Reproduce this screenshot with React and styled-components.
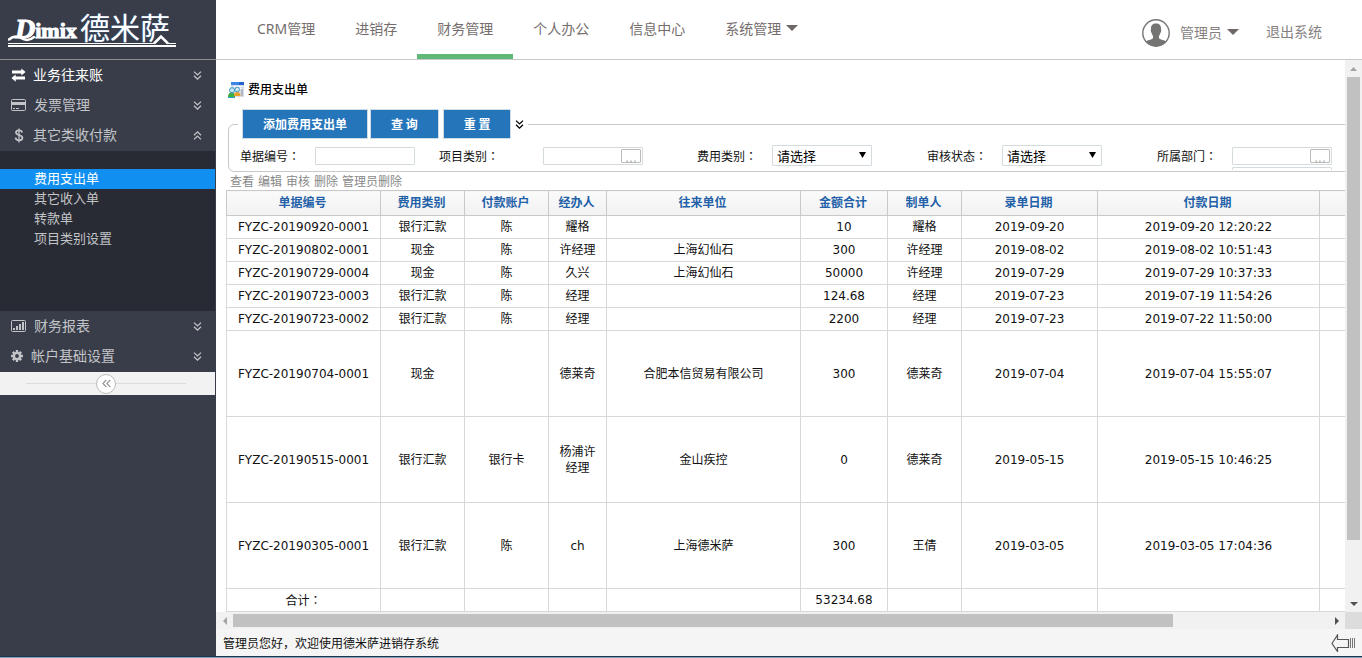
import React from 'react';
import styled, { createGlobalStyle } from 'styled-components';

const Global = createGlobalStyle`
  * { box-sizing: border-box; }
  html, body, #root { height: 100%; }
  body {
    margin: 0;
    overflow: hidden;
    font-family: "DejaVu Sans", "Noto Sans CJK SC", sans-serif;
    font-size: 12px;
    color: #111;
    background: #fff;
  }
  a { color: inherit; text-decoration: none; }
  button, input, select { font-family: inherit; margin: 0; }
  ul { list-style: none; margin: 0; padding: 0; }
`;

const Page = styled.div`
  height: 100%;
  display: grid;
  grid-template-columns: 216px minmax(0, 1fr);
  grid-template-rows: minmax(0, 1fr) 2px;
`;

const DesktopEdge = styled.div`
  grid-column: 1 / -1;
  border-top: 1px solid #1c3348;
  background: #7fa3b8;
`;

/* ---------- sidebar ---------- */

const Sidebar = styled.aside`
  background: #393d49;
  padding-right: 1px;
  font-family: "Noto Sans", "Noto Sans CJK SC", sans-serif;
`;

const LogoBar = styled.div`
  height: 60px;
  margin-right: -1px;
  border-bottom: 1px solid #8c8c8c;
  padding: 11px 0 0 8px;
`;

const Logo = styled.a`
  display: flex;
  flex-direction: column;
  width: 168px;
  color: #fff;
`;

const LogoWords = styled.span`
  display: flex;
  align-items: flex-end;
  height: 32px;
  text-shadow: 0 0 1px #3f86c8;
`;

const LogoLatin = styled.span`
  display: flex;
  align-items: baseline;
  width: 72px;
  font: bold 22px/24px "Liberation Serif", serif;
  -webkit-text-stroke: 1px #fff;
`;

const LogoInitial = styled.span`
  font-size: 28px;
  font-style: italic;
  padding-left: 7px;
`;

const LogoHan = styled.span`
  font: 400 30px/34px "Noto Sans CJK SC", sans-serif;
`;

const LogoRule = styled.svg`
  display: block;
  margin-top: -16px;
`;

const MenuButton = styled.button`
  display: flex;
  align-items: center;
  width: 100%;
  height: 30px;
  padding: 0 13px 0 11px;
  border: 0;
  background: none;
  color: ${(p) => (p.$active ? '#fff' : '#c2c4c8')};
  font-size: 14px;
  line-height: 20px;
  text-align: left;
`;

const MenuIcon = styled.span`
  display: flex;
  width: ${(p) => p.$width || 22}px;
  flex: none;
`;

const MenuLabel = styled.span`
  flex: 1;
`;

const SubMenu = styled.ul`
  height: 160px;
  margin-top: 1px;
  padding-top: 18px;
  background: #282b33;
`;

const SubLink = styled.a`
  display: block;
  height: 20px;
  padding-left: 34px;
  font-size: 13px;
  line-height: 18px;
  color: ${(p) => (p.$active ? '#fff' : '#c2c4c8')};
  background: ${(p) => (p.$active ? '#108ff1' : 'none')};
`;

const CollapseBar = styled.div`
  display: flex;
  align-items: center;
  height: 23px;
  margin-top: 1px;
  padding: 0 29px 0 26px;
  background: #f2f2f2;
  &::before, &::after {
    content: "";
    flex: 1;
    height: 1px;
    background: #ddd;
  }
`;

const CollapseButton = styled.button`
  display: flex;
  align-items: center;
  justify-content: center;
  width: 20px;
  height: 20px;
  padding: 0;
  border: 1px solid #bbb;
  border-radius: 50%;
  background: #fff;
`;

/* ---------- header ---------- */

const Workspace = styled.div`
  display: flex;
  flex-direction: column;
  min-height: 0;
`;

const Header = styled.header`
  display: flex;
  justify-content: space-between;
  flex: none;
  height: 60px;
  padding: 0 40px 0 21px;
  border-bottom: 1px solid #c8c8c8;
  font-family: "Noto Sans", "Noto Sans CJK SC", sans-serif;
  font-size: 14px;
  color: #756d6d;
`;

const Nav = styled.nav`
  display: flex;
`;

const NavLink = styled.a`
  display: flex;
  align-items: center;
  gap: 5px;
  height: 59px;
  padding: 2px 20px 0;
  border-bottom: 5px solid ${(p) => (p.$active ? '#5fb878' : 'transparent')};
  white-space: nowrap;
`;

const Account = styled.div`
  display: flex;
  align-items: center;
  padding-top: 6px;
  color: #857f7f;
  line-height: 20px;
`;

const UserButton = styled.button`
  display: flex;
  align-items: center;
  gap: 5px;
  height: 22px;
  margin: 0 27px 0 10px;
  padding: 0 0 2px;
  border: 0;
  background: none;
  color: inherit;
  font-size: 14px;
`;

const SignOut = styled.a`
  height: 22px;
`;

/* ---------- scrolling frame ---------- */

const Frame = styled.div`
  flex: 1;
  min-height: 0;
  display: grid;
  grid-template-columns: minmax(0, 1fr) 17px;
  grid-template-rows: minmax(0, 1fr) 17px;
`;

const Viewport = styled.main`
  overflow: hidden;
  padding: 22px 0 0 10px;
`;

const Sheet = styled.div`
  width: max-content;
`;

const Track = styled.div`
  display: flex;
  flex-direction: ${(p) => (p.$vertical ? 'column' : 'row')};
  background: #f1f1f1;
`;

const TrackEnd = styled.span`
  display: flex;
  align-items: center;
  justify-content: center;
  flex: none;
  width: 17px;
  height: 17px;
`;

const TrackRun = styled.span`
  flex: 1;
  display: flex;
  flex-direction: inherit;
  padding: ${(p) => (p.$vertical ? '0 2px' : '2px 0')};
`;

const Thumb = styled.span`
  flex: none;
  flex-basis: ${(p) => p.$share}%;
  background: #c1c1c1;
`;

const Corner = styled.div`
  background: #dcdcdc;
`;

const StatusBar = styled.footer`
  display: flex;
  align-items: center;
  justify-content: space-between;
  flex: none;
  height: 27px;
  padding: 0 7px;
  background: #f5f5f5;
`;

const IconButton = styled.button`
  display: flex;
  padding: 0;
  border: 0;
  background: none;
`;

/* ---------- search form ---------- */

const Title = styled.h1`
  display: flex;
  align-items: center;
  gap: 4px;
  height: 16px;
  margin: 0 0 11px;
  padding-left: 2px;
  font-size: 12px;
  line-height: 18px;
  font-weight: 500;
  color: #000;
`;

const SearchBox = styled.fieldset`
  margin: 0 0 0 2px;
  padding: 0;
  border: 1px solid #c8c8c8;
  border-radius: 6px;
`;

const SearchLegend = styled.legend`
  display: flex;
  align-items: center;
  gap: 4px;
  margin-left: 9px;
  padding: 0 4px;
`;

const ButtonPair = styled.span`
  display: flex;
  gap: 2px;
`;

const ActionButton = styled.button`
  height: 30px;
  padding: 0 20px 2px;
  border: 1px solid #cfdbe4;
  background: #2575bb;
  color: #fff;
  font-family: "Noto Sans CJK SC", sans-serif;
  font-size: 12px;
  font-weight: bold;
`;

const Fields = styled.div`
  display: grid;
  grid-template-columns: 75px 124px 104px 154px 75px 155px 75px 155px 75px 100px;
  align-items: start;
  height: 32px;
  padding: 6px 0 0 11px;
`;

const FieldLabel = styled.label`
  line-height: 21px;
`;

const CenteredMark = styled.span`
  font-family: "Noto Sans CJK TC", sans-serif;
`;

const Picker = styled.span`
  display: flex;
  width: 100px;
  height: 18px;
  margin-top: 2px;
  border: 1px solid #d3dbde;
  border-radius: 1px;
  background: #fff;
`;

const TextBox = styled.input`
  flex: 1;
  min-width: 0;
  padding: 0 3px;
  border: 0;
  outline: 0;
  background: none;
  font-size: 12px;
`;

const PickButton = styled.button`
  width: 20px;
  height: 14px;
  margin: 1px;
  padding: 2px 0 0;
  border: 1px solid #bbb;
  border-radius: 1px;
  background: #fff;
  color: #aaa;
  font-size: 12px;
  line-height: 12px;
`;

const StackedPickers = styled.div`
  height: 25px;
  overflow: hidden;
`;

const SelectWrap = styled.span`
  display: flex;
  align-items: center;
  width: 100px;
  height: 21px;
  padding-right: 5px;
  border: 1px solid #d3dbde;
  border-radius: 1px;
`;

const Select = styled.select`
  flex: 1;
  min-width: 0;
  height: 19px;
  padding: 2px 0 0 4px;
  border: 0;
  appearance: none;
  background: none;
  color: #000;
  font-size: 13px;
  line-height: 16px;
`;

const RowActions = styled.div`
  display: flex;
  gap: 4px;
  height: 18px;
  padding-left: 4px;
  line-height: 20px;
  color: #888;
`;

/* ---------- table ---------- */

const Grid = styled.table`
  width: 1233px;
  table-layout: fixed;
  border-collapse: collapse;
`;

const HeadCell = styled.th`
  height: 25px;
  padding: 0 6px 0 4px;
  border: 1px solid #c9c9c9;
  background: linear-gradient(#fafafa, #f2f2f2);
  color: #2261a8;
  font-size: 12px;
  font-weight: bold;
  line-height: 16px;
`;

const Cell = styled.td`
  height: ${(p) => (p.$tall ? 86 : 23)}px;
  padding: 0 8px;
  border: 1px solid #d8d8d8;
  text-align: center;
  line-height: 16px;
`;

/* ---------- drawings ---------- */

const Caret = ({ color = '#6f6666' }) => (
  <svg width="12" height="6" viewBox="0 0 12 6" aria-hidden="true">
    <path d="M0 0h12L6 6z" fill={color} />
  </svg>
);

const DoubleChevron = ({ up, color = '#c2c4c8', size = 9 }) => (
  <svg width={size} height={size} viewBox="0 0 9 9" fill="none" stroke={color} strokeWidth="1.3" aria-hidden="true">
    {up ? (
      <path d="M1 4.2 4.5 .9 8 4.2M1 8.4 4.5 5.1 8 8.4" />
    ) : (
      <path d="M1 .6 4.5 3.9 8 .6M1 4.8 4.5 8.1 8 4.8" />
    )}
  </svg>
);

const ExchangeIcon = () => (
  <svg width="15" height="14" viewBox="0 0 15 14" fill="currentColor" aria-hidden="true">
    <path d="M1 2.6h9.3V.4L14.6 4l-4.3 3.6V5.4H1zM14 8.6H4.7V6.6L.4 10.1l4.3 3.6v-2.2H14z" />
  </svg>
);

const CardIcon = () => (
  <svg width="16" height="12" viewBox="0 0 16 12" aria-hidden="true">
    <rect x=".5" y=".5" width="14" height="11" rx="1" fill="none" stroke="currentColor" />
    <path d="M1 3h13v3H1zM2 9h2v1H2zM5 9h3v1H5z" fill="currentColor" />
  </svg>
);

const DollarIcon = () => (
  <svg width="16" height="15" viewBox="0 0 16 15" fill="none" stroke="currentColor" aria-hidden="true">
    <path d="M11.2 4.4C10.8 2.9 9.6 2.3 8 2.3c-1.8 0-3 .9-3 2.3 0 3.3 6.4 1.7 6.4 5.2 0 1.6-1.4 2.6-3.3 2.6-2 0-3.3-.9-3.6-2.7" strokeWidth="1.8" />
    <path d="M8 .4v14" strokeWidth="1.3" />
  </svg>
);

const ChartIcon = () => (
  <svg width="16" height="12" viewBox="0 0 16 12" aria-hidden="true">
    <rect x=".5" y=".5" width="14" height="11" rx="1" fill="none" stroke="currentColor" />
    <path d="M2 8h2v2H2zM5 6h2v4H5zM8 4h2v6H8zM11 2h2v8h-2z" fill="currentColor" />
  </svg>
);

const GearIcon = () => (
  <svg width="12" height="12" viewBox="0 0 12 12" aria-hidden="true">
    <g stroke="currentColor" strokeWidth="2.4">
      <path d="M6 0v12M0 6h12M1.8 1.8l8.4 8.4M10.2 1.8l-8.4 8.4" />
    </g>
    <circle cx="6" cy="6" r="4.3" fill="currentColor" />
    <circle cx="6" cy="6" r="1.9" fill="#393d49" />
  </svg>
);

const AvatarIcon = () => (
  <svg width="28" height="28" viewBox="0 0 28 28" aria-hidden="true">
    <circle cx="14" cy="14" r="13.2" fill="#fff" stroke="#767676" strokeWidth="1.4" />
    <path
      d="M14 4.4c3.4 0 5.2 2 5 5.4 0 1.2.4 1.4.2 2.4-.2.8-.6 1-.8 1.8-.4 1.6-1 2.4-1.4 3-.2 1.6 0 2.4.6 2.8 1.6 1 4.4 1.2 6.600 2.600A13 13 0 0 1 14 27.200a13 13 0 0 1-10.200-4.800c2.200-1.400 5-1.600 6.600-2.600.6-.4.8-1.200.6-2.800-.4-.6-1-1.400-1.400-3-.2-.8-.6-1-.8-1.800-.2-1 .2-1.200.2-2.400-.2-3.400 1.600-5.400 5-5.400z"
      fill="#747472"
    />
  </svg>
);

const PageIcon = () => (
  <svg width="16" height="16" viewBox="0 0 16 16" aria-hidden="true">
    <path d="M3 0h13v15H3z" fill="#d5dde8" />
    <path d="M3 0h13v3H3z" fill="#3d85e4" />
    <path d="M11 0h5v3h-5z" fill="#2163cf" />
    <path d="M6 4.500h8M10 6.500h4" stroke="#fff" />
    <path d="M13 7h2v7h-2z" fill="#b3b9c4" />
    <path d="M0 15.500c0-4 1.500-5 3.500-5s3.500 1 3.500 5z" fill="#3eae49" />
    <circle cx="4" cy="8.200" r="2.500" fill="#c9e7f5" stroke="#3d97bd" />
    <path d="M6 14c0-3 1.300-4 3.200-4s3.300 1 3.300 4z" fill="#e8a02c" />
    <circle cx="9.200" cy="7.500" r="2.300" fill="#cfe8f4" stroke="#3d97bd" />
    <path d="M0 15.500h7" stroke="#2aa5b8" />
  </svg>
);

const BackArrowIcon = () => (
  <svg width="24" height="18" viewBox="0 0 24 18" fill="none" stroke="#5a5555" aria-hidden="true">
    <path d="M1 9.500 6.500 1v4.500h11v8h-11V17.500z" strokeWidth="1.200" />
    <path d="M19.500 4v10M21.500 4v10M23.500 4v10" stroke="#777" />
  </svg>
);

const arrowPaths = {
  up: 'M0 6 3.500 2 7 6z',
  down: 'M0 2h8L4 6z',
  left: 'M6 0v8L2 4z',
  right: 'M2 0v8l4-4z',
};

const ScrollArrow = ({ dir, color }) => (
  <TrackEnd>
    <svg width="8" height="8" viewBox="0 0 8 8" aria-hidden="true">
      <path d={arrowPaths[dir]} fill={color} />
    </svg>
  </TrackEnd>
);

/* ---------- data ---------- */

const navItems = ['CRM管理', '进销存', '财务管理', '个人办公', '信息中心', '系统管理'];
const subItems = ['费用支出单', '其它收入单', '转款单', '项目类别设置'];
const rowActions = ['查看', '编辑', '审核', '删除', '管理员删除'];

const columns = [
  ['单据编号', 154],
  ['费用类别', 84],
  ['付款账户', 84],
  ['经办人', 58],
  ['往来单位', 194],
  ['金额合计', 87],
  ['制单人', 74],
  ['录单日期', 136],
  ['付款日期', 222],
  ['', 140],
];

const rows = [
  ['FYZC-20190920-0001', '银行汇款', '陈', '耀格', '', '10', '耀格', '2019-09-20', '2019-09-20 12:20:22'],
  ['FYZC-20190802-0001', '现金', '陈', '许经理', '上海幻仙石', '300', '许经理', '2019-08-02', '2019-08-02 10:51:43'],
  ['FYZC-20190729-0004', '现金', '陈', '久兴', '上海幻仙石', '50000', '许经理', '2019-07-29', '2019-07-29 10:37:33'],
  ['FYZC-20190723-0003', '银行汇款', '陈', '经理', '', '124.68', '经理', '2019-07-23', '2019-07-19 11:54:26'],
  ['FYZC-20190723-0002', '银行汇款', '陈', '经理', '', '2200', '经理', '2019-07-23', '2019-07-22 11:50:00'],
  ['FYZC-20190704-0001', '现金', '', '德莱奇', '合肥本信贸易有限公司', '300', '德莱奇', '2019-07-04', '2019-07-04 15:55:07'],
  ['FYZC-20190515-0001', '银行汇款', '银行卡', '杨浦许经理', '金山疾控', '0', '德莱奇', '2019-05-15', '2019-05-15 10:46:25'],
  ['FYZC-20190305-0001', '银行汇款', '陈', 'ch', '上海德米萨', '300', '王倩', '2019-03-05', '2019-03-05 17:04:36'],
];
const firstTallRow = 5;

const Colon = () => <CenteredMark>：</CenteredMark>;

const MenuItem = ({ icon, label, active, open, iconWidth }) => (
  <MenuButton type="button" $active={active} aria-expanded={!!open}>
    <MenuIcon $width={iconWidth}>{icon}</MenuIcon>
    <MenuLabel>{label}</MenuLabel>
    <DoubleChevron up={open} />
  </MenuButton>
);

const PickerField = ({ id }) => (
  <Picker>
    <TextBox id={id} type="text" />
    <PickButton type="button" aria-label="选择">...</PickButton>
  </Picker>
);

const SelectField = ({ id }) => (
  <SelectWrap>
    <Select id={id}>
      <option>请选择</option>
    </Select>
    <svg width="7" height="8" viewBox="0 0 7 8" aria-hidden="true">
      <path d="M0 0h7L3.500 6z" fill="#000" />
    </svg>
  </SelectWrap>
);

export default function App() {
  return (
    <>
      <Global />
      <Page>
        <Sidebar>
          <LogoBar>
            <Logo href="#">
              <LogoWords>
                <LogoLatin>
                  <LogoInitial>D</LogoInitial>imix
                </LogoLatin>
                <LogoHan>德米萨</LogoHan>
              </LogoWords>
              <LogoRule width="168" height="20" viewBox="0 0 168 20" fill="none" stroke="#fff" aria-hidden="true">
                <path d="M1 12.500C5 9 9 8.500 13 11s9 2.500 13-1" strokeWidth="2.500" strokeLinecap="round" />
                <path d="M0 16.500h146M160 16.500h8" />
                <path d="M0 19h168" strokeWidth="2" />
                <path d="M146 16.500l7-7 7 7" strokeWidth="2.500" />
              </LogoRule>
            </Logo>
          </LogoBar>
          <MenuItem icon={<ExchangeIcon />} label="业务往来账" active />
          <MenuItem icon={<CardIcon />} label="发票管理" iconWidth={23} />
          <MenuItem icon={<DollarIcon />} label="其它类收付款" open />
          <SubMenu>
            {subItems.map((text, i) => (
              <li key={text}>
                <SubLink href="#" $active={i === 0}>{text}</SubLink>
              </li>
            ))}
          </SubMenu>
          <MenuItem icon={<ChartIcon />} label="财务报表" iconWidth={23} />
          <MenuItem icon={<GearIcon />} label="帐户基础设置" iconWidth={20} />
          <CollapseBar>
            <CollapseButton type="button" aria-label="收起菜单">
              <svg width="9" height="9" viewBox="0 0 9 9" fill="none" stroke="#999" strokeWidth="1.200" aria-hidden="true">
                <path d="M4.300 1 .9 4.500l3.400 3.500M8.300 1 4.900 4.500l3.400 3.500" />
              </svg>
            </CollapseButton>
          </CollapseBar>
        </Sidebar>

        <Workspace>
          <Header>
            <Nav>
              {navItems.map((text) => (
                <NavLink key={text} href="#" $active={text === '财务管理'}>
                  {text}
                  {text === '系统管理' && <Caret />}
                </NavLink>
              ))}
            </Nav>
            <Account>
              <AvatarIcon />
              <UserButton type="button">
                管理员
                <Caret />
              </UserButton>
              <SignOut href="#">退出系统</SignOut>
            </Account>
          </Header>

          <Frame>
            <Viewport>
              <Sheet>
                <Title>
                  <PageIcon />
                  费用支出单
                </Title>
                <SearchBox>
                  <SearchLegend>
                    <ButtonPair>
                      <ActionButton type="button">添加费用支出单</ActionButton>
                      <ActionButton type="button">查 询</ActionButton>
                    </ButtonPair>
                    <ActionButton type="button">重 置</ActionButton>
                    <DoubleChevron color="#000" />
                  </SearchLegend>
                  <Fields>
                    <FieldLabel htmlFor="billNo">单据编号<Colon /></FieldLabel>
                    <Picker>
                      <TextBox id="billNo" type="text" />
                    </Picker>
                    <FieldLabel htmlFor="project">项目类别<Colon /></FieldLabel>
                    <PickerField id="project" />
                    <FieldLabel htmlFor="feeType">费用类别<Colon /></FieldLabel>
                    <SelectField id="feeType" />
                    <FieldLabel htmlFor="audit">审核状态<Colon /></FieldLabel>
                    <SelectField id="audit" />
                    <FieldLabel htmlFor="dept">所属部门<Colon /></FieldLabel>
                    <StackedPickers>
                      <PickerField id="dept" />
                      <Picker />
                    </StackedPickers>
                  </Fields>
                </SearchBox>
                <RowActions>
                  {rowActions.map((text) => (
                    <a key={text} href="#">{text}</a>
                  ))}
                </RowActions>
                <Grid>
                  <colgroup>
                    {columns.map(([name, width]) => (
                      <col key={name} width={width} />
                    ))}
                  </colgroup>
                  <thead>
                    <tr>
                      {columns.map(([name]) => (
                        <HeadCell key={name}>{name}</HeadCell>
                      ))}
                    </tr>
                  </thead>
                  <tbody>
                    {rows.map((row, r) => (
                      <tr key={row[0]}>
                        {columns.map(([name], c) => (
                          <Cell key={name} $tall={r >= firstTallRow}>{row[c]}</Cell>
                        ))}
                      </tr>
                    ))}
                    <tr>
                      {columns.map(([name], c) => (
                        <Cell key={name}>
                          {c === 0 && <>合计<Colon /></>}
                          {c === 5 && '53234.68'}
                        </Cell>
                      ))}
                    </tr>
                  </tbody>
                </Grid>
              </Sheet>
            </Viewport>
            <Track $vertical>
              <ScrollArrow dir="up" color="#a3a3a3" />
              <TrackRun $vertical>
                <Thumb $share={89.4} />
              </TrackRun>
              <ScrollArrow dir="down" color="#505050" />
            </Track>
            <Track>
              <ScrollArrow dir="left" color="#a3a3a3" />
              <TrackRun>
                <Thumb $share={85.8} />
              </TrackRun>
              <ScrollArrow dir="right" color="#505050" />
            </Track>
            <Corner />
          </Frame>

          <StatusBar>
            <span>管理员您好，欢迎使用德米萨进销存系统</span>
            <IconButton type="button" aria-label="返回">
              <BackArrowIcon />
            </IconButton>
          </StatusBar>
        </Workspace>
        <DesktopEdge />
      </Page>
    </>
  );
}
